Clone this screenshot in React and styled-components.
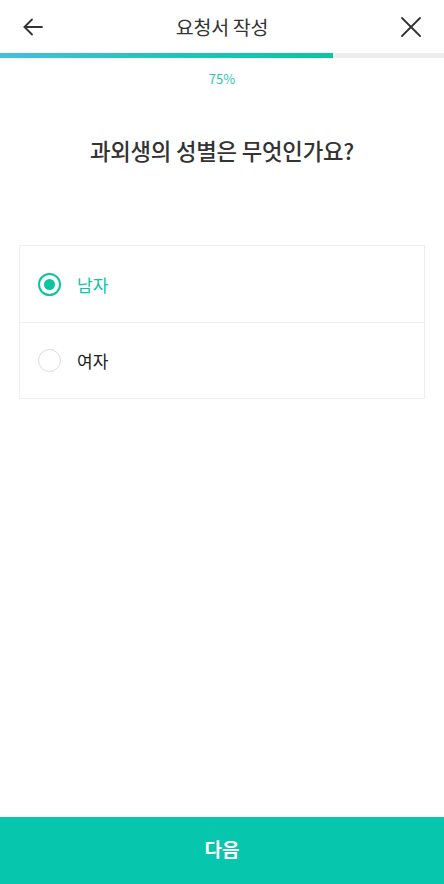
import styled, { createGlobalStyle } from "styled-components";
import { useState } from "react";

const GlobalStyle = createGlobalStyle`
  html, body { margin: 0; padding: 0; background: #fff; }
  body { font-family: "Noto Sans CJK KR", "Noto Sans", sans-serif; }
  * { box-sizing: border-box; }
`;

const options = ["남자", "여자"];

const App = () => {
  const [picked, setPicked] = useState(0);
  const percent = 75;
  return (
    <Page>
      <GlobalStyle />
      <Header>
        <IconButton aria-label="back">
          <svg width="24" height="24" viewBox="0 0 24 24" fill="none" stroke="#333" strokeWidth="1.8" strokeLinecap="round" strokeLinejoin="round">
            <path d="M21 12H3.5" />
            <path d="M11 4.5L3.5 12L11 19.5" />
          </svg>
        </IconButton>
        <Title>요청서 작성</Title>
        <IconButton aria-label="close">
          <svg width="24" height="24" viewBox="0 0 24 24" fill="none" stroke="#333" strokeWidth="1.8" strokeLinecap="round">
            <path d="M3 3L21 21" />
            <path d="M21 3L3 21" />
          </svg>
        </IconButton>
      </Header>
      <Track>
        <Fill style={{ width: `${percent}%` }} />
      </Track>
      <Percent>{percent}%</Percent>
      <Question>과외생의 성별은 무엇인가요?</Question>
      <Card>
        {options.map((o, i) => (
          <Option key={o} onClick={() => setPicked(i)}>
            <Radio $on={picked === i} />
            <Label $on={picked === i}>{o}</Label>
          </Option>
        ))}
      </Card>
      <Spacer />
      <NextButton>다음</NextButton>
    </Page>
  );
};

const Page = styled.div`
  width: 444px;
  height: 884px;
  display: flex;
  flex-direction: column;
  background: #fff;
`;

const Header = styled.div`
  height: 53px;
  display: flex;
  align-items: center;
  justify-content: space-between;
  padding: 0 21px 0 21px;
`;

const IconButton = styled.button`
  width: 24px;
  height: 24px;
  padding: 0;
  border: 0;
  background: none;
  display: flex;
  align-items: center;
  justify-content: center;
`;

const Title = styled.div`
  font-size: 19.5px;
  color: #333;
  letter-spacing: -0.3px;
`;

const Track = styled.div`
  height: 5px;
  background: #eeeeee;
`;

const Fill = styled.div`
  height: 100%;
  background: linear-gradient(90deg, #45bfdc 0%, #1dc4b4 60%, #0ac5a0 100%);
`;

const Percent = styled.div`
  margin-top: 11px;
  text-align: center;
  font-size: 13px;
  color: #2ec5b0;
`;

const Question = styled.div`
  margin-top: 46px;
  text-align: center;
  font-size: 22.3px;
  font-weight: 500;
  color: #333;
  letter-spacing: -0.2px;
`;

const Card = styled.div`
  margin: 79px 19px 0 19px;
  border: 1px solid #efefef;
`;

const Option = styled.div`
  height: 76px;
  display: flex;
  align-items: center;
  padding-left: 18px;
  & + & { border-top: 1px solid #efefef; }
`;

const Radio = styled.span`
  width: 23px;
  height: 23px;
  border-radius: 50%;
  border: ${(p) => (p.$on ? "2.5px solid #0bc4a4" : "1.5px solid #dcdcdc")};
  display: flex;
  align-items: center;
  justify-content: center;
  &::after {
    content: "";
    width: 11px;
    height: 11px;
    border-radius: 50%;
    background: #0bc4a4;
    display: ${(p) => (p.$on ? "block" : "none")};
  }
`;

const Label = styled.span`
  margin-left: 16px;
  font-size: 17px;
  color: ${(p) => (p.$on ? "#14c1a5" : "#222")};
`;

const Spacer = styled.div`
  flex: 1;
`;

const NextButton = styled.button`
  height: 67px;
  border: 0;
  padding: 0 0 5px 0;
  background: #06c6ad;
  color: #fff;
  font-family: "Noto Sans CJK KR", sans-serif;
  font-size: 19px;
  font-weight: 700;
`;

export default App;
